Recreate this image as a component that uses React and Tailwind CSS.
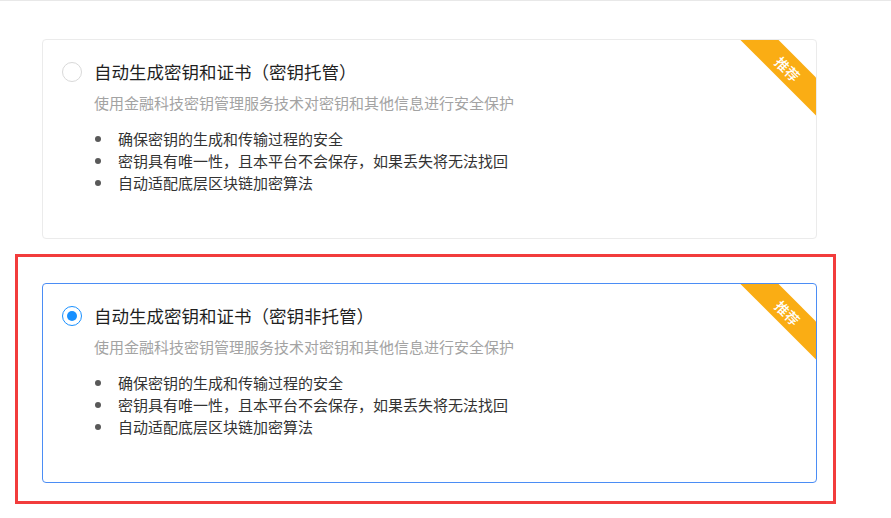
import React from 'react';

const points = [
  '确保密钥的生成和传输过程的安全',
  '密钥具有唯一性，且本平台不会保存，如果丢失将无法找回',
  '自动适配底层区块链加密算法',
];

function Radio({ checked }) {
  return (
    <span
      className={`flex h-[20px] w-[20px] shrink-0 items-center justify-center rounded-full border bg-white ${
        checked ? 'border-[#1890ff] border-[1.5px]' : 'border-[#d9d9d9]'
      }`}
    >
      {checked && <span className="h-[10px] w-[10px] rounded-full bg-[#1890ff]" />}
    </span>
  );
}

function KeyCard({ title, checked }) {
  return (
    <div
      className={`relative h-[200px] w-[775px] overflow-hidden rounded-[4px] border bg-white pl-[19px] pt-[22px] ${
        checked ? 'border-[#4b8df5]' : 'border-[#ebebeb]'
      }`}
    >
      {/* corner ribbon */}
      <div className="absolute right-[-42px] top-[15px] flex h-[27px] w-[140px] rotate-45 items-center justify-center bg-[#faad14] text-[14px] font-medium leading-none text-white">
        推荐
      </div>

      <div className="flex h-[20px] items-center">
        <Radio checked={checked} />
        <span className="ml-[12px] text-[17.5px] leading-[20px] text-[#1f1f1f]">{title}</span>
      </div>

      <div className="ml-[32px]">
        <p className="mt-[11px] text-[15px] leading-[20px] text-[#a3a3a3]">
          使用金融科技密钥管理服务技术对密钥和其他信息进行安全保护
        </p>
        <ul className="mt-[15px]">
          {points.map((p) => (
            <li key={p} className="flex h-[22px] items-center text-[15px] text-[#333]">
              <span className="ml-[1px] mr-[17px] h-[6px] w-[6px] rounded-full bg-[#595959]" />
              {p}
            </li>
          ))}
        </ul>
      </div>
    </div>
  );
}

export default function App() {
  return (
    <div
      className="min-h-[518px] w-full border-t border-[#e8e8e8] bg-white pl-[15px] pt-[38px]"
      style={{ fontFamily: '"Noto Sans CJK SC", "Noto Sans", sans-serif' }}
    >
      <div className="ml-[27px]">
        <KeyCard title="自动生成密钥和证书（密钥托管）" />
      </div>

      {/* highlighted option */}
      <div className="mt-[15px] w-[821px] border-[3px] border-[#f23c3c] pb-[18px] pl-[24px] pr-[16px] pt-[26px]">
        <KeyCard title="自动生成密钥和证书（密钥非托管）" checked />
      </div>
    </div>
  );
}
